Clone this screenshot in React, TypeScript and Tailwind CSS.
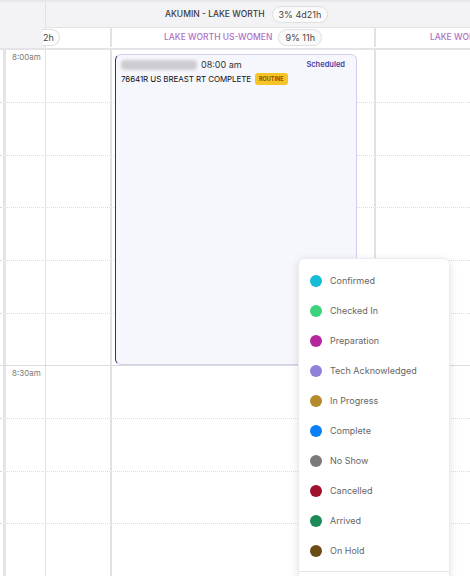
import React from "react";

const statuses = [
    { label: "Confirmed", color: "bg-[#16bcd6]" },
    { label: "Checked In", color: "bg-[#3dd37c]" },
    { label: "Preparation", color: "bg-[#b4279c]" },
    { label: "Tech Acknowledged", color: "bg-[#8f80d9]" },
    { label: "In Progress", color: "bg-[#b58a2b]" },
    { label: "Complete", color: "bg-[#0b80f6]" },
    { label: "No Show", color: "bg-[#7a7a7a]" },
    { label: "Cancelled", color: "bg-[#a0112f]" },
    { label: "Arrived", color: "bg-[#1b8a56]" },
    { label: "On Hold", color: "bg-[#6b4c14]" },
];

const rowHeights = [53, 53, 52, 53, 53, 52, 53, 53, 52, 53, 53];

function Pill({ text }: { text: string }) {
    return (
        <span className="rounded-full border border-[#dedee2] bg-[#fafafa] px-[6px] py-[2px] text-[9px] text-[#444] leading-[11px]">
            {text}
        </span>
    );
}

export default function App() {
    return (
        <div
            className="relative w-[470px] h-[576px] overflow-hidden bg-white"
            style={{ fontFamily: "Inter, 'Noto Sans', sans-serif" }}
        >
            {/* header */}
            <div className="flex border-t-2 border-[#e7e7ea] border-b-2 border-b-[#e4e4e6]">
                <div className="w-[46px] h-[46px] shrink-0 bg-[#f3f3f5] border-r border-[#e2e2e4]" />
                <div className="flex-1 flex flex-col">
                    <div className="h-[26px] bg-[#f3f3f5] border-b border-[#e2e2e4] flex items-center pl-[119px] gap-[7px]">
                        <span className="text-[8.5px] font-medium text-[#3a3a3a]">AKUMIN - LAKE WORTH</span>
                        <Pill text="3% 4d21h" />
                    </div>
                    <div className="h-[19px] flex bg-white">
                        <div className="w-[66px] shrink-0 border-r-2 border-[#e2e2e4] flex items-center">
                            <span className="rounded-r-full border border-l-0 border-[#dedee2] bg-white pl-0 pr-[5px] py-[2px] text-[9px] leading-[11px] text-[#444] -ml-[3px]">
                                2h
                            </span>
                        </div>
                        <div className="w-[264px] shrink-0 border-r-2 border-[#e2e2e4] flex items-center justify-center gap-[6px]">
                            <span className="text-[8.5px] font-medium text-[#b070c6]">LAKE WORTH US-WOMEN</span>
                            <Pill text="9% 11h" />
                        </div>
                        <div className="w-[264px] shrink-0 flex items-center justify-center gap-[6px]">
                            <span className="text-[8.5px] font-medium text-[#b070c6]">LAKE WORTH US-WOMEN</span>
                            <Pill text="8% 9h" />
                        </div>
                    </div>
                </div>
            </div>

            {/* grid */}
            <div className="flex flex-col">
                {rowHeights.map((h, i) => {
                    const line = i % 6 === 5 ? "border-b border-solid border-[#dcdce0]" : "border-b border-dotted border-[#dcdce0]";
                    const label = i === 0 ? "8:00am" : i === 6 ? "8:30am" : "";
                    return (
                        <div key={i} className={`flex ${line}`} style={{ height: h }}>
                            <div className="w-[46px] shrink-0 border-r border-[#e2e2e4] flex">
                                <div className="w-[3px] ml-[3px] bg-[#e4e4e7]" />
                                <span className="pl-[6px] pt-[1px] text-[8px] text-[#7a7a7a]">{label}</span>
                            </div>
                            <div className="w-[66px] shrink-0 border-r-2 border-[#e2e2e4]" />
                            <div className="w-[264px] shrink-0 border-r-2 border-[#e2e2e4]" />
                            <div className="flex-1" />
                        </div>
                    );
                })}
            </div>

            {/* appointment */}
            <div className="absolute left-[115px] top-[54px] w-[242px] h-[311px] rounded-[6px] border border-[#cfd0ea] border-l-[#3f2c7c] bg-[#f6f6fd] px-[5px] pt-[3px]">
                <div className="flex items-center">
                    <div className="w-[76px] h-[10px] bg-[#cdcdd1] rounded-sm blur-[1.5px]" />
                    <span className="ml-[4px] text-[9px] text-[#333]">08:00 am</span>
                    <span className="ml-auto mr-[6px] text-[7.5px] font-semibold text-[#4b3ea0]">Scheduled</span>
                </div>
                <div className="flex items-center mt-[1px]">
                    <span className="text-[8px] text-[#111] tracking-[-0.1px]">76641R US BREAST RT COMPLETE</span>
                    <span className="ml-[4px] rounded-[3px] bg-[#f7c427] px-[4px] py-[3px] text-[5.5px] font-bold text-[#8a5200] leading-[6px]">
                        ROUTINE
                    </span>
                </div>
            </div>

            {/* status menu */}
            <div className="absolute left-[298px] top-[258px] w-[152px] h-[340px] bg-white rounded-md border border-[#ececee] shadow-[0_2px_8px_rgba(0,0,0,0.12)] pt-[7px]">
                {statuses.map((s) => (
                    <div key={s.label} className="h-[30px] flex items-center pl-[11px] gap-[8px]">
                        <span className={`w-[12px] h-[12px] rounded-full ${s.color}`} />
                        <span className="text-[9px] text-[#666]">{s.label}</span>
                    </div>
                ))}
                <div className="mt-[5px] border-t border-[#e4e4e6]" />
            </div>
        </div>
    );
}
